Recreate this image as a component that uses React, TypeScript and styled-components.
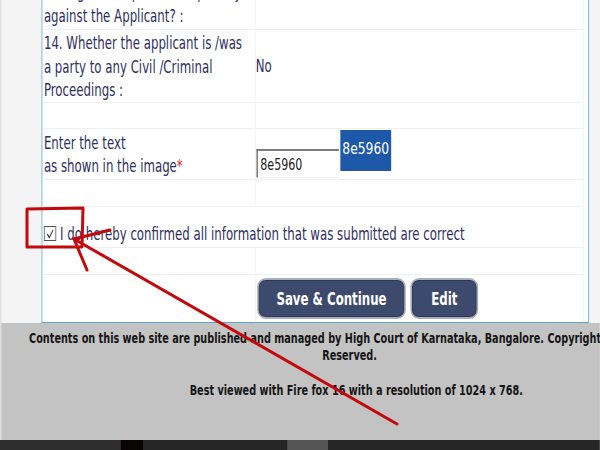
import React from 'react';
import styled, { createGlobalStyle } from 'styled-components';

// the screenshot is squeezed sideways, so the page is laid out wide and scaled down on x
const SQUEEZE = 0.77;

const GlobalStyle = createGlobalStyle`
  html, body {
    margin: 0;
    padding: 0;
    overflow: hidden;
    background: #f4f4f4;
  }
`

const Screen = styled.div`
  position: relative;
  width: 600px;
  height: 450px;
  overflow: hidden;
`

const Page = styled.div`
  width: 779px;
  height: 450px;
  display: flex;
  flex-direction: column;
  font-family: "DejaVu Sans Condensed", "DejaVu Sans", sans-serif;
  transform: scaleX(${SQUEEZE});
  transform-origin: 0 0;
`

const Main = styled.div`
  height: 323px;
  display: flex;
  padding-left: 52px;
  padding-right: 14px;
  background: #f4f4f4;
  border-left: 2px solid #e2e2e2;
  box-sizing: border-box;
`

const Panel = styled.div`
  flex: 1;
  display: flex;
  flex-direction: column;
  justify-content: flex-end;
  overflow: hidden;
  background: #fff;
  border: 1px solid #5aa7cc;
  border-top: none;
  padding-right: 6px;
`

const Row = styled.div<{ h: number; full?: boolean }>`
  height: ${p => p.h}px;
  box-sizing: border-box;
  flex-shrink: 0;
  display: grid;
  grid-template-columns: ${p => (p.full ? '1fr' : '277px 1fr')};
  border-bottom: 1px solid #eef1f1;
  border-right: 1px solid #eef1f1;
  &:last-child { border-bottom: none; }
`

const Label = styled.div<{ bottom?: boolean }>`
  padding: ${p => (p.bottom ? '0 0 1px 2px' : '2px 0 0 2px')};
  display: flex;
  flex-direction: column;
  justify-content: ${p => (p.bottom ? 'flex-end' : 'center')};
  color: #2e2e62;
  font-size: 17px;
  line-height: 23.5px;
  white-space: nowrap;
  border-right: 1px solid #eef1f1;
`

const Value = styled.div<{ top?: boolean }>`
  padding: ${p => (p.top ? '0' : '3px 0 0')} 0 0 1px;
  display: flex;
  align-items: ${p => (p.top ? 'flex-start' : 'center')};
  color: #2e2e62;
  font-size: 17px;
`

const Star = styled.span`
  color: #e03030;
`

const CaptchaInput = styled.div`
  width: 102px;
  height: 26px;
  margin-top: 20px;
  border-top: 2px solid #7c7c7c;
  border-left: 2px solid #7c7c7c;
  border-bottom: 1px solid #f0f0f0;
  padding-left: 3px;
  color: #222;
  font-size: 16px;
  line-height: 28px;
`

const CaptchaImage = styled.div`
  width: 66px;
  height: 41px;
  margin-left: 2px;
  margin-top: 1px;
  background: #1e58a9;
  color: #fff;
  font-family: "DejaVu Sans", sans-serif;
  font-size: 16px;
  line-height: 38px;
  text-align: center;
`

const CheckRow = styled.label`
  display: flex;
  align-items: center;
  gap: 5px;
  padding: 13px 0 0 2px;
  color: #2e2e62;
  font-size: 17px;
  white-space: nowrap;
`

const Check = styled.span`
  width: 14px;
  height: 13px;
  border: 1px solid #555;
  display: inline-flex;
  align-items: center;
  justify-content: center;
  svg { display: block; }
`

const Buttons = styled.div`
  display: flex;
  align-items: center;
  gap: 6px;
  padding-left: 2px;
`

const Button = styled.button<{ w: number }>`
  width: ${p => p.w}px;
  height: 41px;
  border-radius: 11px / 9px;
  border: 2px solid #a9adb6;
  background: #3e4a6d;
  color: #fff;
  font-family: inherit;
  font-weight: bold;
  font-size: 17px;
  box-shadow: inset 0 0 0 1px #2e3858;
  padding: 0;
`

const Footer = styled.div`
  flex: 1;
  background: #c3c3c3;
  border-left: 2px solid #dcdcdc;
  overflow: hidden;
`

const FooterText = styled.div<{ gap?: number }>`
  width: 904px;
  text-align: center;
  font-weight: bold;
  font-size: 14px;
  line-height: 17px;
  color: #151515;
  margin-top: ${p => p.gap ?? 0}px;
  white-space: nowrap;
`

const Taskbar = styled.div`
  height: 10px;
  flex-shrink: 0;
  display: flex;
  background: #262626;
`

const Segment = styled.div<{ w: number; c: string }>`
  width: ${p => p.w}px;
  background: ${p => p.c};
`

const Overlay = styled.svg`
  position: absolute;
  left: 0;
  top: 0;
  pointer-events: none;
`

const App: React.FC = () => {
  return (
    <Screen>
      <GlobalStyle />
      <Page>
        <Main>
          <Panel>
            <Row h={60}>
              <Label bottom>
                <span>Ending with imposition of penalty,</span>
                <span>against the Applicant? :</span>
              </Label>
              <Value />
            </Row>
            <Row h={73}>
              <Label>
                <span>14. Whether the applicant is /was</span>
                <span>a party to any Civil /Criminal</span>
                <span>Proceedings :</span>
              </Label>
              <Value>No</Value>
            </Row>
            <Row h={26}><Label /><Value /></Row>
            <Row h={51}>
              <Label>
                <span>Enter the text</span>
                <span>as shown in the image<Star>*</Star></span>
              </Label>
              <Value top>
                <CaptchaInput>8e5960</CaptchaInput>
                <CaptchaImage>8e5960</CaptchaImage>
              </Value>
            </Row>
            <Row h={27}><Label /><Value /></Row>
            <Row h={41} full>
              <CheckRow>
                <Check>
                  <svg width="10" height="10" viewBox="0 0 10 10">
                    <path d="M1.5 5 L4 8.5 L9 1" fill="none" stroke="#333" strokeWidth="1.3" />
                  </svg>
                </Check>
                I do hereby confirmed all information that was submitted are correct
              </CheckRow>
            </Row>
            <Row h={27}><Label /><Value /></Row>
            <Row h={47}>
              <Label />
              <Buttons>
                <Button w={193}>Save &amp; Continue</Button>
                <Button w={88}>Edit</Button>
              </Buttons>
            </Row>
          </Panel>
        </Main>
        <Footer>
          <FooterText gap={7}>
            Contents on this web site are published and managed by High Court of Karnataka, Bangalore. Copyright © All Rights
          </FooterText>
          <FooterText>Reserved.</FooterText>
          <FooterText gap={18}>&nbsp;&nbsp;&nbsp;&nbsp;Best viewed with Fire fox 16 with a resolution of 1024 x 768.</FooterText>
        </Footer>
        <Taskbar>
          <Segment w={157} c="#2d2d2d" />
          <Segment w={29} c="#0a0505" />
          <Segment w={187} c="#262626" />
          <Segment w={53} c="#555555" />
        </Taskbar>
      </Page>
      <Overlay width="600" height="450" viewBox="0 0 600 450">
        <g fill="none" stroke="#c4090d" strokeWidth="3" strokeLinecap="round" strokeLinejoin="round">
          <path d="M27 209 L83 208 L82 247 L27 247 Z" />
          <path d="M397 424 L74 239" />
          <path d="M74 239 L110 230" />
          <path d="M74 239 L87 270" />
        </g>
      </Overlay>
    </Screen>
  );
}

export default App;
